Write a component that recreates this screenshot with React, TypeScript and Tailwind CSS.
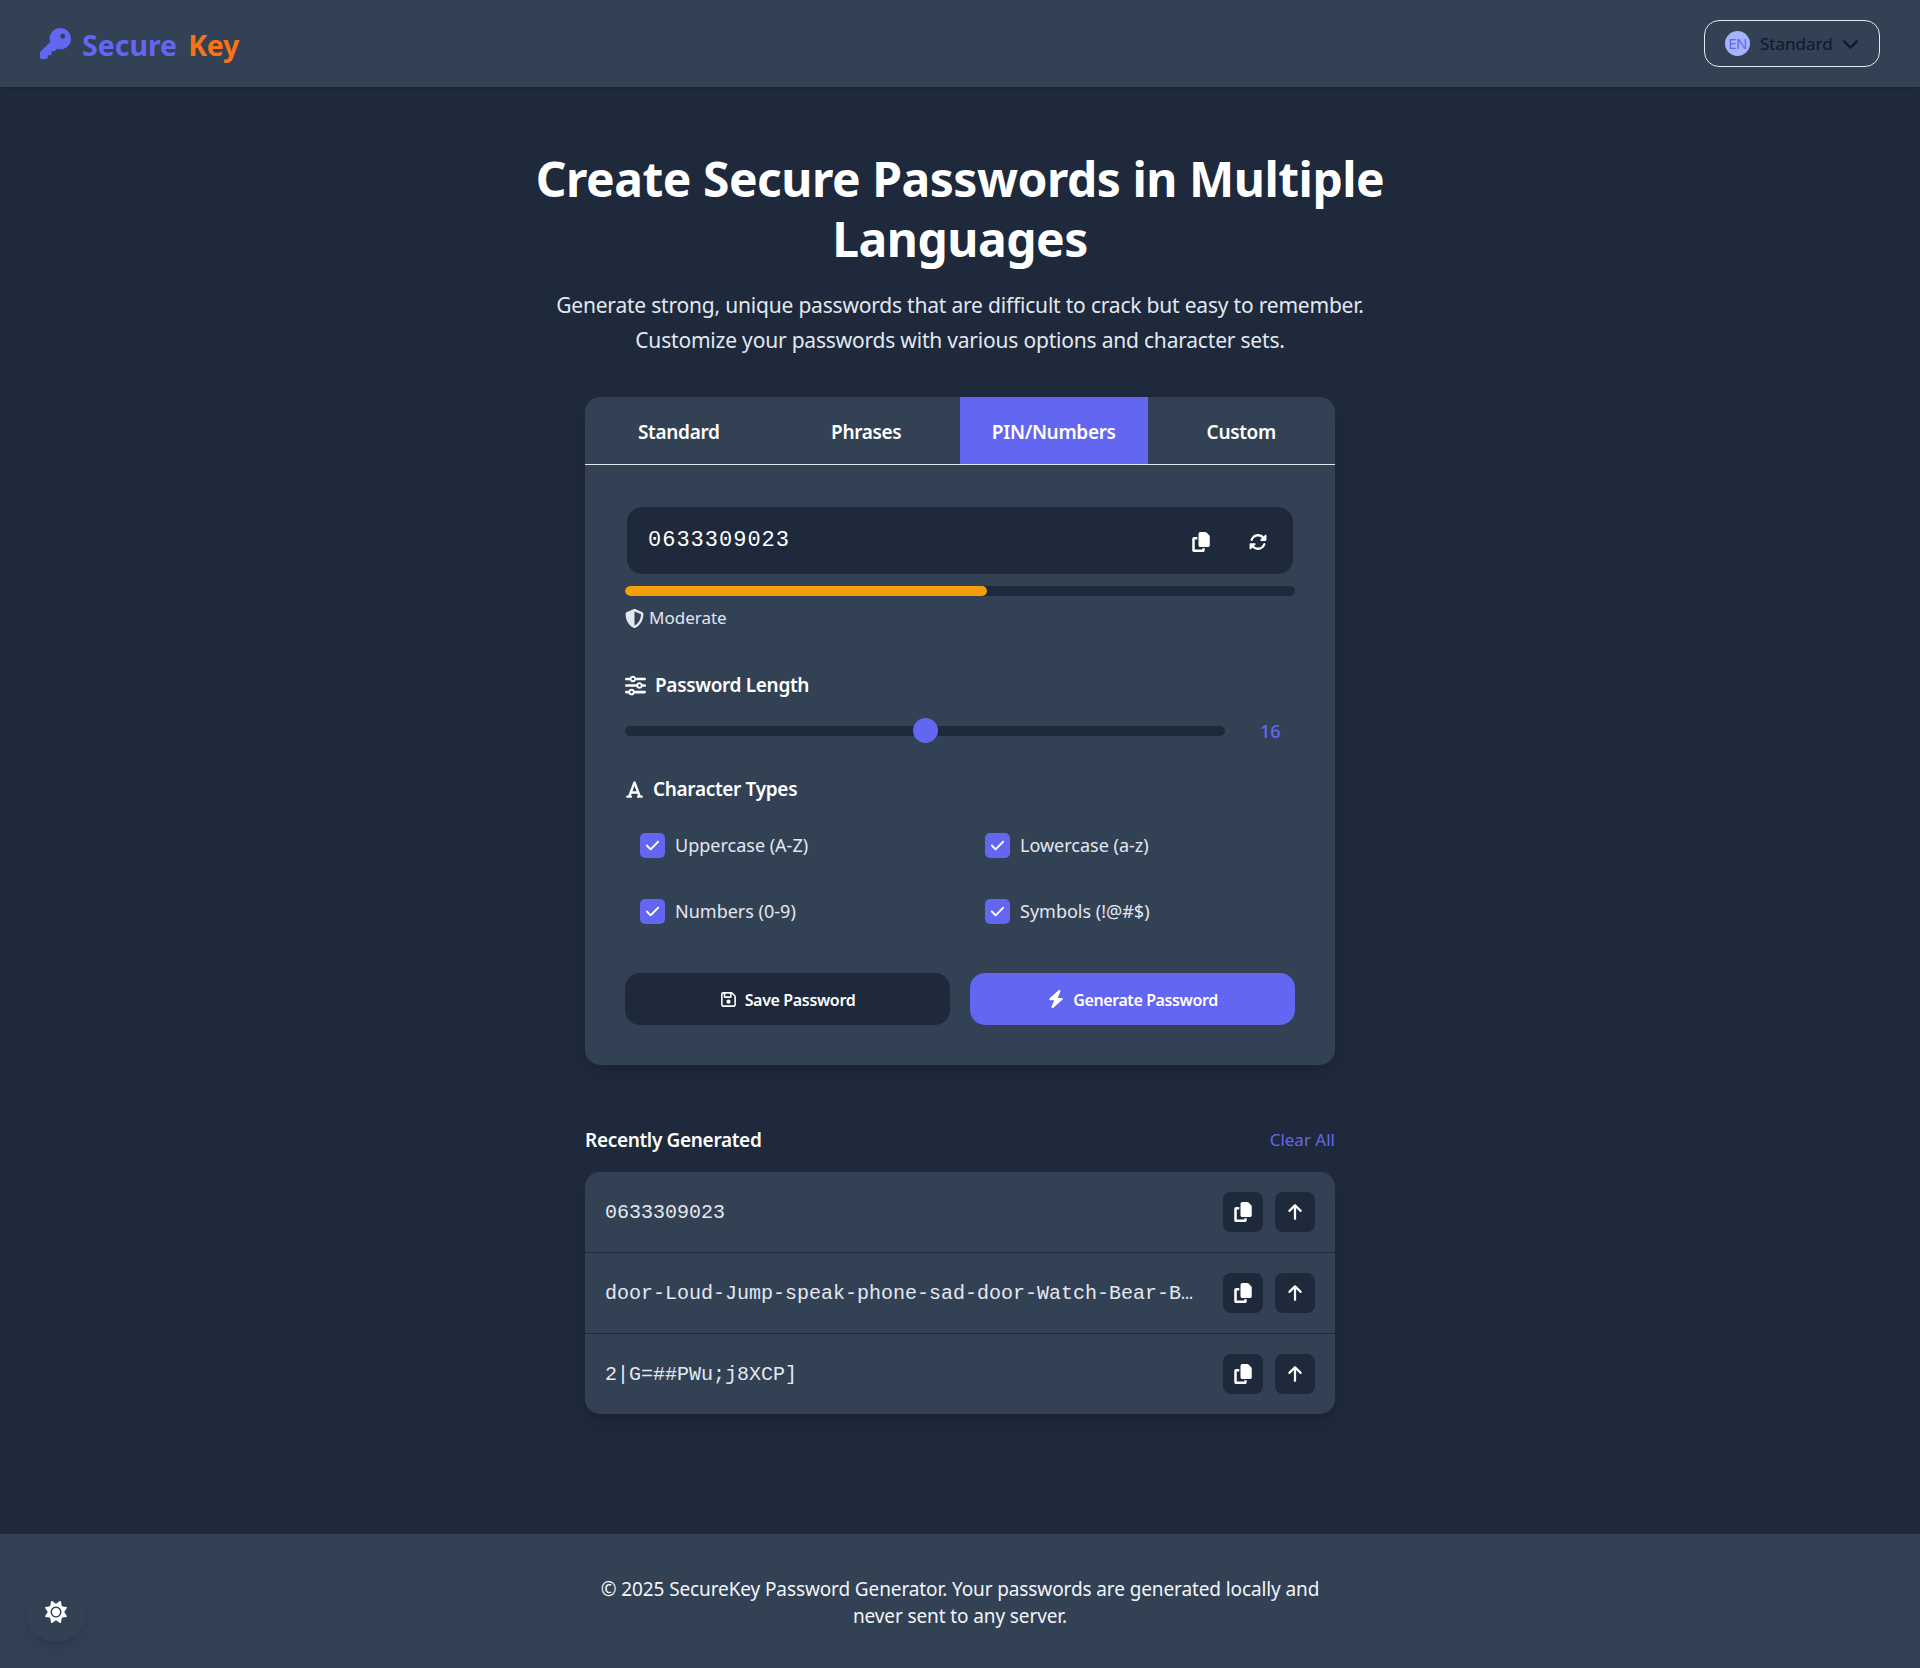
import { FaArrowUp, FaBolt, FaCheck, FaChevronDown, FaCopy, FaFont, FaKey, FaRegFloppyDisk, FaRotate, FaShieldHalved, FaSliders, FaSun } from "react-icons/fa6";

const tabs = ["Standard", "Phrases", "PIN/Numbers", "Custom"];
const charTypes = ["Uppercase (A-Z)", "Lowercase (a-z)", "Numbers (0-9)", "Symbols (!@#$)"];
const recent = [
  "0633309023",
  "door-Loud-Jump-speak-phone-sad-door-Watch-Bear-Blue-river",
  "2|G=##PWu;j8XCP]",
];

function Header() {
  return (
    <header className="h-[87px] bg-[#334155] flex items-center justify-between px-10 shadow-sm">
      <div className="flex items-center gap-[11px] text-[28.5px] font-bold">
        <FaKey className="w-[31px] h-[31px] text-[#6366f1]" />
        <div className="flex gap-[11px] leading-none pt-[4px]">
          <span className="text-[#6366f1]">Secure</span>
          <span className="text-[#f97316] tracking-[-0.3px]">Key</span>
        </div>
      </div>
      <div className="w-[176px] h-[47px] rounded-[15px] border border-[#e2e8f0] flex items-center pl-[20px] text-[#0f172a] text-[17px]">
        <span className="w-[25px] h-[25px] rounded-full bg-[#a5b4fc] text-[#6366f1] text-[15px] tracking-[-0.5px] flex items-center justify-center">EN</span>
        <span className="ml-[10px] pt-[1px]">Standard</span>
        <FaChevronDown className="ml-[9px] w-[17px] h-[17px]" />
      </div>
    </header>
  );
}

function GeneratorCard() {
  return (
    <div className="w-[750px] mt-[39px] bg-[#334155] rounded-[15px] shadow-lg overflow-hidden">
      <div className="flex border-b border-[#e2e8f0]">
        {tabs.map((t) => (
          <div
            key={t}
            className={`flex-1 h-[67px] pt-[3px] flex items-center justify-center text-[19px] tracking-[-0.33px] font-semibold ${t === "PIN/Numbers" ? "bg-[#6366f1]" : ""}`}
          >
            {t}
          </div>
        ))}
      </div>
      <div className="p-10">
        <div className="mx-[2px] mt-[2px] h-[67px] rounded-[15px] bg-[#1e293b] flex items-center pl-[21px] pr-[26px]">
          <span className="flex-1 font-['Liberation_Mono',monospace] text-[22px] tracking-[1px]">0633309023</span>
          <FaCopy className="w-[20px] h-[20px] mr-[38px] mt-[3px]" />
          <FaRotate className="w-[18px] h-[18px] mt-[3px]" />
        </div>
        <div className="mt-3 h-[10px] rounded-full bg-[#1e293b] overflow-hidden">
          <div className="h-full w-[54%] rounded-full bg-[#f59e0b]" />
        </div>
        <div className="mt-2 flex items-center gap-[5px] text-[17px] leading-7 text-[#e2e8f0]">
          <FaShieldHalved className="w-[19px] h-[19px]" />
          Moderate
        </div>
        <div className="mt-[39px] flex items-center gap-[9px] text-[19px] leading-7 tracking-[-0.33px] font-semibold">
          <FaSliders className="w-[21px] h-[21px]" />
          Password Length
        </div>
        <div className="mt-[18px] flex items-center">
          <div className="relative w-[600px] h-[10px] rounded-full bg-[#1e293b]">
            <div className="absolute left-[288px] top-[-8px] w-[25px] h-[25px] rounded-full bg-[#6366f1]" />
          </div>
          <span className="ml-[35px] text-lg leading-7 font-medium text-[#6366f1]">16</span>
        </div>
        <div className="mt-[30px] flex items-center gap-[9px] text-[19px] leading-7 tracking-[-0.33px] font-semibold">
          <FaFont className="w-[19px] h-[19px]" />
          Character Types
        </div>
        <div className="mt-[28px] grid grid-cols-2 gap-x-[50px] gap-y-[38px] px-[15px]">
          {charTypes.map((c) => (
            <div key={c} className="flex items-center gap-[10px] text-lg leading-7 text-[#e2e8f0]">
              <span className="w-[25px] h-[25px] rounded-[5px] bg-[#6366f1] flex items-center justify-center">
                <FaCheck className="w-[15px] h-[15px] text-white" />
              </span>
              {c}
            </div>
          ))}
        </div>
        <div className="mt-[48px] flex gap-5">
          <button className="flex-1 h-[52px] rounded-[15px] bg-[#1e293b] flex items-center justify-center gap-2 text-base tracking-[-0.35px] font-semibold">
            <FaRegFloppyDisk className="w-[17px] h-[17px]" />
            <span className="pt-[1px]">Save Password</span>
          </button>
          <button className="flex-1 h-[52px] rounded-[15px] bg-[#6366f1] flex items-center justify-center gap-2 text-base tracking-[-0.4px] font-semibold">
            <FaBolt className="w-[18px] h-[18px]" />
            <span className="pt-[1px]">Generate Password</span>
          </button>
        </div>
      </div>
    </div>
  );
}

function RecentList() {
  return (
    <div className="w-[750px] mt-[60px]">
      <div className="flex items-center justify-between h-[30px]">
        <span className="text-[19px] tracking-[-0.33px] font-semibold">Recently Generated</span>
        <span className="text-[17px] text-[#6366f1]">Clear All</span>
      </div>
      <div className="mt-[17px] bg-[#334155] rounded-[15px] overflow-hidden shadow-lg">
        {recent.map((r, i) => (
          <div
            key={r}
            className={`flex items-center p-5 ${i < recent.length - 1 ? "border-b border-[#1e293b]" : ""}`}
          >
            <span className="w-[590px] pt-[1px] truncate font-['Liberation_Mono',monospace] text-[20px] text-[#e2e8f0]">{r}</span>
            <div className="ml-auto flex gap-3">
              <span className="w-10 h-10 rounded-lg bg-[#1e293b] flex items-center justify-center">
                <FaCopy className="w-5 h-5" />
              </span>
              <span className="w-10 h-10 rounded-lg bg-[#1e293b] flex items-center justify-center">
                <FaArrowUp className="w-[18px] h-[18px]" />
              </span>
            </div>
          </div>
        ))}
      </div>
    </div>
  );
}

export default function App() {
  return (
    <div className="relative min-h-screen flex flex-col bg-[#1e293b] text-white font-['Noto_Sans',sans-serif]">
      <Header />
      <main className="flex flex-col items-center h-[1447px] pt-[62px]">
        <h1 className="w-[900px] text-center text-5xl leading-[60px] tracking-[-0.5px] font-bold">
          Create Secure Passwords in Multiple Languages
        </h1>
        <p className="mt-[19px] w-[830px] text-center text-[21px] leading-[35px] tracking-[-0.2px] text-[#e2e8f0]">
          Generate strong, unique passwords that are difficult to crack but easy to remember. Customize your passwords with various options and character sets.
        </p>
        <GeneratorCard />
        <RecentList />
      </main>
      <footer className="h-[134px] pt-[4px] bg-[#334155] flex items-center justify-center">
        <p className="w-[750px] text-center text-[19px] leading-[27px] tracking-[-0.11px] text-[#f1f5f9]">
          © 2025 SecureKey Password Generator. Your passwords are generated locally and never sent to any server.
        </p>
      </footer>
      <div className="absolute left-[26px] bottom-[26px] w-[60px] h-[60px] rounded-full bg-[#334155] shadow-lg flex items-center justify-center">
        <FaSun className="w-[22px] h-[22px]" />
      </div>
    </div>
  );
}
